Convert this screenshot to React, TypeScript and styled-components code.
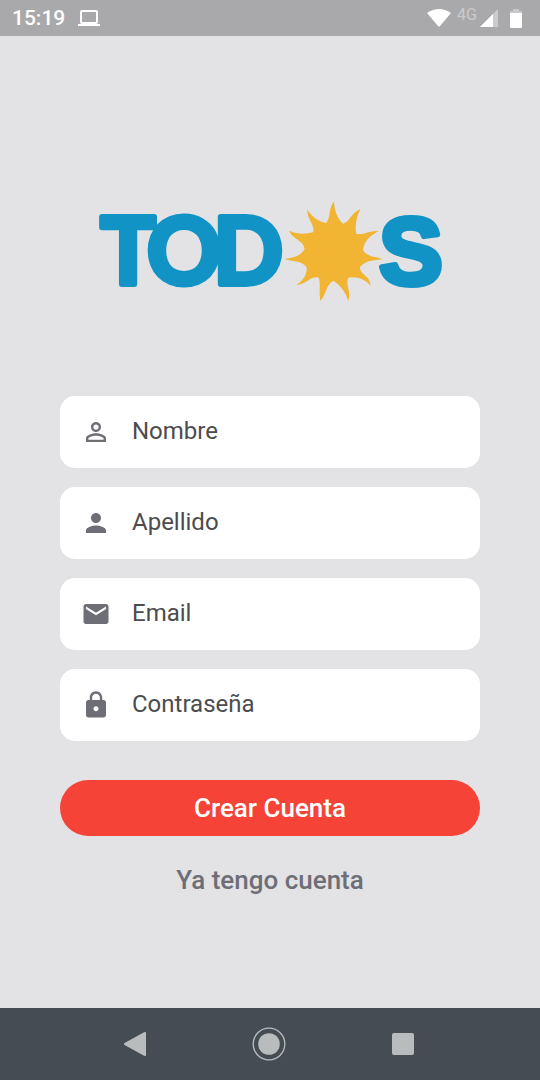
import React from "react";
import styled, { createGlobalStyle } from "styled-components";
import { MdLock, MdMail, MdPerson, MdPersonOutline } from "react-icons/md";

const GlobalStyle = createGlobalStyle`
  *, *::before, *::after { box-sizing: border-box; }
  body {
    margin: 0;
    background: #e3e3e5;
    font-family: Roboto, "Noto Sans", sans-serif;
  }
`;

const Screen = styled.div`
  display: flex;
  flex-direction: column;
  min-height: 100vh;
`;

const StatusBar = styled.header`
  display: flex;
  align-items: center;
  justify-content: space-between;
  height: 36px;
  padding: 0 18px 0 12px;
  background: #a9a9ab;
  color: #fff;
`;

const StatusGroup = styled.div<{ $gap: number }>`
  display: flex;
  align-items: center;
  gap: ${(p) => p.$gap}px;
`;

const Clock = styled.time`
  font-size: 21px;
  font-weight: 500;
  line-height: 36px;
`;

const Network = styled.span`
  height: 26px;
  font-size: 16px;
  line-height: 20px;
  color: #c9c9cb;
`;

const Content = styled.main`
  display: flex;
  flex: 1;
  flex-direction: column;
  padding: 144px 60px 40px;
`;

const Logo = styled.svg`
  align-self: center;
  width: 360px;
  max-width: 100%;
`;

const LogoLetter = styled.text<{ $family: string; $size: number }>`
  font-family: "${(p) => p.$family}", sans-serif;
  font-size: ${(p) => p.$size}px;
  font-weight: 700;
  text-anchor: middle;
  fill: #1193c6;
  stroke: #1193c6;
  stroke-width: 6px;
  stroke-linejoin: round;
`;

const Form = styled.form`
  display: flex;
  flex-direction: column;
  margin-top: 76px;
`;

const Fields = styled.div`
  display: flex;
  flex-direction: column;
  gap: 19px;
`;

const Field = styled.label`
  display: flex;
  align-items: center;
  gap: 21px;
  height: 72px;
  padding: 0 21px;
  border-radius: 15px;
  background: #fff;
  color: #6e6e77;

  svg { flex: none; }
`;

const Input = styled.input`
  flex: 1;
  min-width: 0;
  height: 48px;
  margin-bottom: 2px;
  padding: 0;
  border: 0;
  outline: 0;
  background: transparent;
  color: #4c4c4e;
  font-family: inherit;
  font-size: 24px;

  &::placeholder { color: #4c4c4e; opacity: 1; }
`;

const SubmitButton = styled.button`
  height: 56px;
  margin-top: 39px;
  padding: 0;
  border: 0;
  border-radius: 28px;
  background: #f54337;
  color: #fff;
  font-family: inherit;
  font-size: 26px;
  font-weight: 500;
  cursor: pointer;
`;

const LoginLink = styled.a`
  align-self: center;
  margin-top: 28px;
  color: #6e6e77;
  font-size: 26px;
  font-weight: 500;
  line-height: 32px;
  text-decoration: none;
`;

const NavBar = styled.nav`
  display: grid;
  grid-template-columns: repeat(3, 134px);
  justify-content: center;
  height: 72px;
  padding-right: 2px;
  background: #454d53;
`;

const NavButton = styled.button`
  display: flex;
  align-items: center;
  justify-content: center;
  padding: 0;
  border: 0;
  background: transparent;
  color: #b9bcbc;
`;

const fields = [
  { id: "nombre", label: "Nombre", type: "text", Icon: MdPersonOutline },
  { id: "apellido", label: "Apellido", type: "text", Icon: MdPerson },
  { id: "email", label: "Email", type: "email", Icon: MdMail },
  { id: "password", label: "Contraseña", type: "password", Icon: MdLock },
];

function LaptopIcon() {
  return (
    <svg width="22" height="17" viewBox="0 0 22 17" fill="none" aria-hidden="true">
      <rect x="3" y="1" width="16" height="12" rx="1" stroke="#fff" strokeWidth="2" />
      <path d="M0 14h22v2H0z" fill="#fff" />
    </svg>
  );
}

function WifiIcon() {
  return (
    <svg width="24" height="19" viewBox="0 0 24 19" aria-hidden="true">
      <path d="M0 4Q12-4 24 4L13 17q-1 1-2 0z" fill="#fff" />
    </svg>
  );
}

function SignalIcon() {
  return (
    <svg width="18" height="18" viewBox="0 0 18 18" aria-hidden="true">
      <path d="M18 0v18H0z" fill="#cbcbcd" />
      <path d="M13 5v13H0z" fill="#fff" />
    </svg>
  );
}

function BatteryIcon() {
  return (
    <svg width="12" height="19" viewBox="0 0 12 19" aria-hidden="true">
      <path d="M3 0h6v2h3v3H0V2h3z" fill="#c9c9cb" />
      <path d="M0 4h12v14q0 1-1 1H1q-1 0-1-1z" fill="#fff" />
    </svg>
  );
}

function TodosLogo() {
  return (
    <Logo viewBox="90 180 360 140" role="img" aria-label="TODOS">
      <LogoLetter $family="Lato" $size={91} x="128" y="284">T</LogoLetter>
      <LogoLetter $family="Lato" $size={91} x="184" y="284">O</LogoLetter>
      <LogoLetter $family="Lato" $size={91} x="248" y="284">D</LogoLetter>
      <path
        transform="translate(270 190) scale(.3333)"
        fill="#f1b433"
        d="M192 34C193 62 202 86 219 101C242 94 238 74 271 57C259 82 254 108 259 131C282 137 293 121 327 123C301 135 282 154 279 181C295 203 314 198 338 208C309 212 287 211 269 232C273 258 300 255 302 287C285 267 260 258 235 263C225 287 245 303 235 333C226 305 211 286 190 272C166 287 171 310 151 333C146 304 153 284 146 263C121 256 112 283 79 285C100 272 112 253 110 232C93 210 73 217 44 207C71 203 93 198 104 176C99 148 69 150 57 122C80 133 106 133 129 127C136 106 112 90 111 58C125 80 145 96 169 99C184 80 173 61 192 34Z"
      />
      <LogoLetter $family="Liberation Sans" $size={95} x="411" y="284">S</LogoLetter>
    </Logo>
  );
}

export default function App() {
  return (
    <Screen>
      <GlobalStyle />
      <StatusBar>
        <StatusGroup $gap={13}>
          <Clock>15:19</Clock>
          <LaptopIcon />
        </StatusGroup>
        <StatusGroup $gap={12}>
          <StatusGroup $gap={6}>
            <WifiIcon />
            <StatusGroup $gap={3}>
              <Network>4G</Network>
              <SignalIcon />
            </StatusGroup>
          </StatusGroup>
          <BatteryIcon />
        </StatusGroup>
      </StatusBar>

      <Content>
        <TodosLogo />
        <Form onSubmit={(e) => e.preventDefault()}>
          <Fields>
            {fields.map(({ id, label, type, Icon }) => (
              <Field key={id} htmlFor={id}>
                <Icon size={30} aria-hidden="true" />
                <Input id={id} type={type} placeholder={label} aria-label={label} />
              </Field>
            ))}
          </Fields>
          <SubmitButton type="submit">Crear Cuenta</SubmitButton>
          <LoginLink href="#login">Ya tengo cuenta</LoginLink>
        </Form>
      </Content>

      <NavBar aria-label="Sistema">
        <NavButton type="button" aria-label="Atrás">
          <svg width="22" height="26" viewBox="0 0 22 26" aria-hidden="true">
            <path d="M1 13L21 2v22z" fill="currentColor" stroke="currentColor" strokeWidth="2" strokeLinejoin="round" />
          </svg>
        </NavButton>
        <NavButton type="button" aria-label="Inicio">
          <svg width="34" height="34" viewBox="0 0 34 34" aria-hidden="true">
            <circle cx="17" cy="17" r="15.8" fill="none" stroke="currentColor" strokeWidth="1.3" />
            <circle cx="17" cy="17" r="10.8" fill="currentColor" />
          </svg>
        </NavButton>
        <NavButton type="button" aria-label="Recientes">
          <svg width="24" height="24" viewBox="0 0 24 24" aria-hidden="true">
            <rect x="1" y="1" width="22" height="22" rx="2" fill="currentColor" />
          </svg>
        </NavButton>
      </NavBar>
    </Screen>
  );
}
